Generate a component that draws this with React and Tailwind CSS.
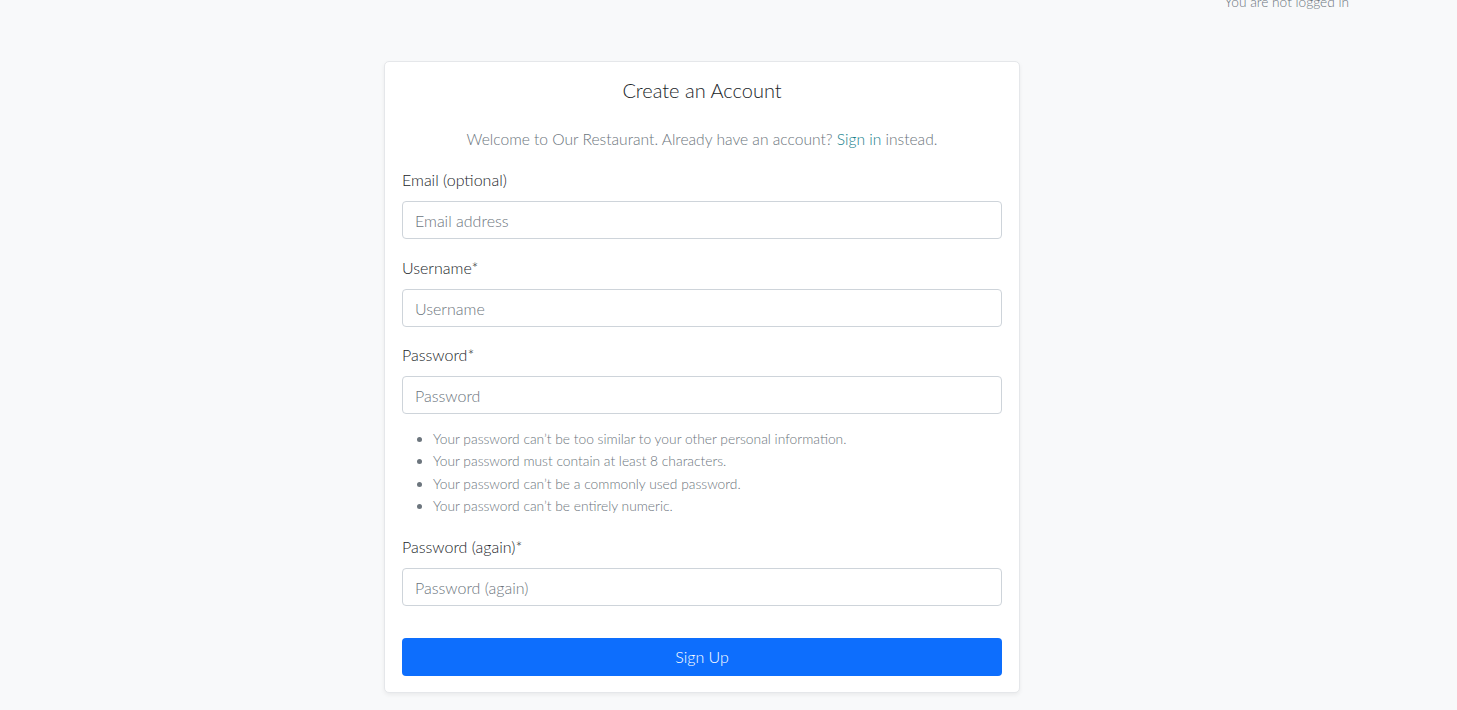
import React from 'react';

const fields = [
  { id: 'email', label: 'Email (optional)', placeholder: 'Email address', type: 'email' },
  { id: 'username', label: 'Username*', placeholder: 'Username', type: 'text' },
  { id: 'password1', label: 'Password*', placeholder: 'Password', type: 'password' },
  { id: 'password2', label: 'Password (again)*', placeholder: 'Password (again)', type: 'password' },
];

const passwordHelp = [
  "Your password can\u2019t be too similar to your other personal information.",
  'Your password must contain at least 8 characters.',
  "Your password can\u2019t be a commonly used password.",
  "Your password can\u2019t be entirely numeric.",
];

const Field = ({ field }) => (
  <div className="flex flex-col">
    <label htmlFor={field.id} className="text-[16px] leading-6 text-[#212529] mb-[9px]">
      {field.label}
    </label>
    <input
      id={field.id}
      type={field.type}
      placeholder={field.placeholder}
      className="h-[38px] w-full rounded-[4px] border border-[#ced4da] bg-white px-3 text-[16px] font-light text-[#212529] placeholder:text-[#6c757d] focus:outline-0"
    />
  </div>
);

const App = () => {
  return (
    <div className="flow-root min-h-screen bg-[#f8f9fa] font-['Lato','Liberation_Sans',sans-serif] font-light">
      <div className="flex justify-end pr-[108px] -mt-[7px] h-[17px]">
        <span className="text-[13.7px] leading-[17px] text-[#6c757d]">You are not logged in</span>
      </div>

      <div className="ml-[384px] mt-[51px] w-[636px] rounded-[5px] border border-[#e5e7ea] bg-white px-[17px] pt-[16px] pb-[16px] shadow-[0_2px_4px_rgba(0,0,0,0.06)]">
        <h1 className="text-center text-[20px] leading-6 text-[#212529] font-light">Create an Account</h1>
        <p className="mt-[25px] text-center text-[15.6px] leading-6 text-[#6c757d]">
          Welcome to Our Restaurant. Already have an account?{' '}
          <a href="#" className="text-[#14808c]">Sign in</a> instead.
        </p>

        <form className="mt-[17px] flex flex-col">
          <Field field={fields[0]} />
          <div className="mt-[17px]">
            <Field field={fields[1]} />
          </div>
          <div className="mt-[16px]">
            <Field field={fields[2]} />
          </div>
          <ul className="mt-[14px] list-disc pl-[31px] text-[13.8px] leading-[22.3px] text-[#6c757d]">
            {passwordHelp.map((t) => (
              <li key={t}>{t}</li>
            ))}
          </ul>
          <div className="mt-[18px]">
            <Field field={fields[3]} />
          </div>
          <button
            type="button"
            className="mt-[32px] h-[38px] w-full rounded-[4px] bg-[#0d6efd] text-[16px] font-light text-white"
          >
            Sign Up
          </button>
        </form>
      </div>
    </div>
  );
};

export default App;
